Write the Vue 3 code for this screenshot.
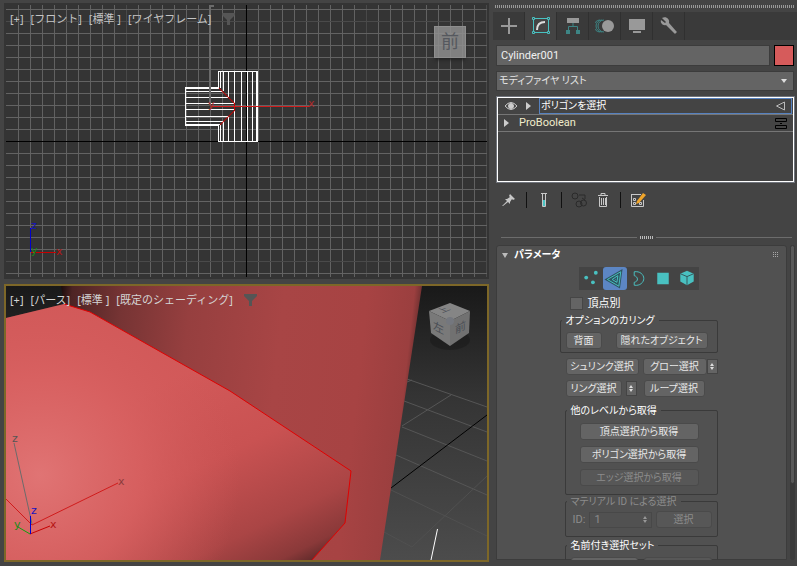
<template>
  <main class="workspace">
    <section class="viewports">
      <!-- Front view -->
      <div class="viewport front">
        <svg class="scene" viewBox="6 5 481 272" preserveAspectRatio="xMidYMid slice">
          <g class="grid">
            <path v-for="x in gridX" :key="'x' + x" :class="lineClass(x, 126, 246)" :d="`M${x + 0.5} 5V277`" />
            <path v-for="y in gridY" :key="'y' + y" :class="lineClass(y, 21, 141)" :d="`M6 ${y + 0.5}H487`" />
            <path class="axis-line" d="M246.500 5V277M6 141.500H487" />
          </g>
          <g class="wire">
            <path d="M218.500 88V71.500H257.500V141.500H218.500V125M256.500 71V142" />
            <path d="M220.500 71V88M220.500 125V141M223.500 71V91M223.500 121V141M228.500 71V97M228.500 116V141M234.500 71V103M234.500 111V141M241.500 71V141M247.500 71V141M252.500 71V141" />
            <path d="M219 87.500H185.500V125.500H219M185 88.500H219M185 124.500H220M185 91.500H223M185 97.500H228M185 103.500H234M185 109.500H234M185 116.500H228M185 121.500H223" />
          </g>
          <path class="edge" d="M219 88L228 97L234.500 103.500V110.500L228 117L220 125" />
          <path class="gizmo-z" d="M210 5V105M210 6H214" />
          <path class="gizmo-x thin" d="M212 106.500H310" />
          <text class="axis-text faded-red" x="308" y="107">x</text>
          <text class="axis-text faded-red" x="208" y="108">y</text>
          <path class="blue" d="M30.500 228V252" />
          <path class="red" d="M31 252.500H56" />
          <text class="axis-text text-blue" x="31" y="229">z</text>
          <text class="axis-text text-green" x="31" y="254">y</text>
          <text class="axis-text text-red" x="56" y="255">x</text>
        </svg>
        <div class="view-labels dim">
          <button v-for="label in frontLabels" :key="label" type="button">{{ label }}</button>
          <svg class="funnel" viewBox="0 0 13 12"><path d="M0 0H13V2L8 7V12H5V7L0 2Z" /></svg>
        </div>
        <button class="front-cube" type="button">前</button>
      </div>

      <!-- Perspective view -->
      <div class="viewport persp">
        <svg class="scene" viewBox="6 286 481 274" preserveAspectRatio="xMidYMid slice">
          <defs>
            <linearGradient id="sky" x1="0" y1="0" x2="0" y2="1">
              <stop offset="0" stop-color="#191919" />
              <stop offset=".4" stop-color="#343434" />
              <stop offset="1" stop-color="#4c4c4c" />
            </linearGradient>
            <linearGradient id="trunk" gradientUnits="userSpaceOnUse" x1="62" y1="286" x2="418" y2="325">
              <stop offset="0" stop-color="#1f0d0d" />
              <stop offset=".03" stop-color="#4d2424" />
              <stop offset=".17" stop-color="#763434" />
              <stop offset=".36" stop-color="#963f3f" />
              <stop offset=".62" stop-color="#a84545" />
              <stop offset=".85" stop-color="#a74343" />
              <stop offset=".98" stop-color="#9b3f3f" />
              <stop offset="1" stop-color="#713131" />
            </linearGradient>
            <linearGradient id="branch" gradientUnits="userSpaceOnUse" x1="190" y1="370" x2="290" y2="575">
              <stop offset="0" stop-color="#d25959" />
              <stop offset=".4" stop-color="#c95252" />
              <stop offset=".75" stop-color="#aa4545" />
              <stop offset=".92" stop-color="#8a3939" />
              <stop offset="1" stop-color="#5a2828" />
            </linearGradient>
            <radialGradient id="shine" gradientUnits="userSpaceOnUse" cx="40" cy="475" r="200">
              <stop offset="0" stop-color="#e07474" />
              <stop offset=".5" stop-color="#d96262" stop-opacity=".8" />
              <stop offset="1" stop-color="#cf5858" stop-opacity="0" />
            </radialGradient>
          </defs>
          <rect x="6" y="286" width="481" height="274" fill="url(#sky)" />
          <path class="floor" d="M407 379L487 407M404 401L487 432M402 427L487 461M396 455L487 495M402 426L451 395M407 382L412 380" />
          <path class="floor far" d="M391 490L487 536M384 532L412 547M412 547L487 476" />
          <path class="floor-axis" d="M391 488L487 415" />
          <path class="white-line" d="M437.500 529L431 560" />
          <path fill="url(#trunk)" d="M61 286H422L380 560H150L64 304Z" />
          <path fill="url(#branch)" d="M6 318L64 304L90 312L230 391L351 471L345 523L312 560H6Z" />
          <path fill="url(#shine)" d="M6 318L64 304L90 312L230 391L351 471L345 523L312 560H6Z" />
          <path class="edge bright" d="M64 304L90 312L230 391L351 471L345 523L312 560" />
          <path class="gizmo-z thin" d="M14 443L32 524" />
          <path class="gizmo-x thin" d="M6 499L32 525L118 483" />
          <path class="green" d="M30 534L18 527" />
          <path class="red" d="M30 534L50 526" />
          <path class="blue" d="M30.500 516V534" />
          <text class="axis-text text-grey" x="12" y="442">z</text>
          <text class="axis-text text-brown" x="118" y="485">x</text>
          <text class="axis-text text-blue" x="31" y="514">z</text>
          <text class="axis-text text-green" x="14" y="528">y</text>
          <text class="axis-text text-red" x="50" y="528">x</text>
        </svg>
        <div class="view-labels">
          <button v-for="label in perspLabels" :key="label" type="button">{{ label }}</button>
          <svg class="funnel" viewBox="0 0 13 12"><path d="M0 0H13V2L8 7V12H5V7L0 2Z" /></svg>
        </div>
        <svg class="persp-cube" viewBox="0 0 50 54">
          <ellipse cx="25" cy="40" rx="20" ry="10" fill="#000" opacity=".18" />
          <path d="M25 3L45 11L25 21L4 11Z" fill="#858585" />
          <path d="M4 11L25 21V46L6 33Z" fill="#797979" />
          <path d="M45 11L25 21V46L44 33Z" fill="#717171" />
          <circle cx="25" cy="21" r="4" fill="#74777e" />
          <text transform="matrix(1 .5 0 1 8 29)">左</text>
          <text transform="matrix(1 -.5 0 1 30 34)">前</text>
          <text class="small" transform="matrix(1 -.4 1 .4 17 13)">上</text>
        </svg>
      </div>
    </section>

    <aside class="panel">
      <div class="grip"></div>
      <nav class="tabs">
        <button
          v-for="tab in tabs"
          :key="tab"
          type="button"
          :aria-label="tab"
          :class="{ active: tab === activeTab }"
          @click="activeTab = tab"
        >
          <svg viewBox="0 0 20 20">
            <path v-if="tab === 'create'" class="ln thick" d="M10 2V18M2 10H18" />
            <g v-else-if="tab === 'modify'">
              <path class="teal-ln" d="M4 2.500H16M4 16.500H16M2.500 4V15M17.500 4V15" />
              <path class="teal-box" d="M1.500 1.500h2v2h-2zM16.500 1.500h2v2h-2zM1.500 15.500h2v2h-2zM16.500 15.500h2v2h-2z" />
              <path class="ln arc" d="M6 14C6 9 9 6 14 6" />
            </g>
            <g v-else-if="tab === 'hierarchy'">
              <path class="fill" d="M4 2H16V7H4Z" />
              <path class="teal-ln dark" d="M10 7V11M5.500 15V10.500H14.500V15" />
              <path class="teal-fill" d="M3 14H7V18H3ZM13 14H17V18H13Z" />
            </g>
            <g v-else-if="tab === 'motion'">
              <path class="teal-ln dark" d="M7 4A6 6 0 0 0 7 16M5 4A6 6 0 0 0 5 16M9 4A6 6 0 0 0 9 16" />
              <circle class="fill" cx="13" cy="10" r="6" />
            </g>
            <path v-else-if="tab === 'display'" class="fill" d="M2 3H18V14H2ZM6 15H14V17H6Z" />
            <path v-else class="fill" d="M3 2L7 6L6 7L2 4C1 7 4 10 7 9L15 17C16 19 19 16 17 15L10 7C11 3 7 0 3 2Z" />
          </svg>
        </button>
      </nav>

      <div class="name-row">
        <input v-model="objectName" type="text" aria-label="オブジェクト名" />
        <button class="swatch" type="button" aria-label="カラー"></button>
      </div>
      <div class="modifier-select">
        <select aria-label="モディファイヤ リスト">
          <option>モディファイヤ リスト</option>
        </select>
      </div>

      <ul class="stack">
        <li>
          <svg class="eye" viewBox="0 0 14 10"><path d="M1 5Q7 -2 13 5Q7 12 1 5Z" /><circle cx="7" cy="5" r="2.500" /></svg>
          <span class="tri"></span>
          <button class="entry selected" type="button">
            ポリゴンを選択
            <svg viewBox="0 0 12 12"><path d="M1.500 6L9.500 2V10Z" /></svg>
          </button>
        </li>
        <li>
          <span class="tri"></span>
          <button class="entry base" type="button">
            ProBoolean
            <svg class="sep-icon" viewBox="0 0 12 12"><path d="M.5 1.500H11.500V4.500H.5ZM.5 8.500H11.500V11.500H.5ZM5 6.500H7" /></svg>
          </button>
        </li>
      </ul>

      <div class="stack-tools">
        <button type="button" aria-label="スタックを固定">
          <svg viewBox="0 0 16 16"><path class="fill light" d="M9 2L14 7L12 8L11 7L9 10L9 12L7 10L2 14L1 14L6 9L4 7L6 7L9 5L8 4Z" /></svg>
        </button>
        <i></i>
        <button type="button" aria-label="最終結果を表示">
          <svg viewBox="0 0 16 16"><path class="ln light-ln" d="M5 1.500H11M6.500 2V14.500H9.500V2" /><path fill="#4cc4c4" d="M7 8H9V14H7Z" /></svg>
        </button>
        <i></i>
        <button type="button" aria-label="固有にする">
          <svg viewBox="0 0 16 16"><g class="dark-ln"><circle cx="4" cy="4" r="3" /><circle cx="8" cy="12" r="3" /><circle cx="12.500" cy="11" r="3" /><path d="M8 3H14V7M11 6L14 8" /></g></svg>
        </button>
        <button type="button" aria-label="モディファイヤを除去">
          <svg viewBox="0 0 16 16"><path class="ln light-ln" d="M3 3.500H13M6 3V1.500H10V3M4.500 5V14.500H11.500V5M6.500 6V13M8.500 6V13M10.500 6V13" /></svg>
        </button>
        <i></i>
        <button type="button" aria-label="モディファイヤ セットを設定">
          <svg viewBox="0 0 16 16">
            <path class="ln light-ln" d="M1.500 2V14.500H13.500V8M1 2.500H11M3.500 6.500H5.500V8.500H3.500ZM3.500 10.500H5.500V12.500H3.500ZM9.500 10.500H11.500V12.500H9.500Z" />
            <path fill="#f0a52a" d="M13 1L16 3L9 11L6 12L7 9Z" />
          </svg>
        </button>
      </div>

      <div class="splitter"><span></span></div>

      <div class="rollout-area">
        <section class="rollout">
          <header>
            <span class="tri down"></span>
            <h2>パラメータ</h2>
            <svg class="dots" viewBox="0 0 6 6"><path d="M0 .5H6M0 2.500H6M0 4.500H6" /></svg>
          </header>

          <div class="params">
            <div class="levels">
              <button
                v-for="level in levels"
                :key="level"
                type="button"
                :aria-label="level"
                :class="{ active: level === activeLevel }"
                @click="activeLevel = level"
              >
                <svg viewBox="0 0 24 24">
                  <g v-if="level === 'vertex'" fill="#49c1c1"><circle cx="7" cy="11" r="2" /><circle cx="17" cy="6" r="2" /><circle cx="14" cy="16" r="2" /></g>
                  <g v-else-if="level === 'edge'" class="edge-icon">
                    <path class="outline" d="M4 13L18 5L16 20Z" />
                    <path class="outline" d="M9 13L15 9L14 16Z" />
                    <path d="M4 13L18 5L16 20Z" />
                    <path d="M9 13L15 9L14 16Z" />
                  </g>
                  <path v-else-if="level === 'border'" class="border-icon" d="M7 5C13 4 17 8 17 12C17 16 13 20 7 19V16C12 15 11 10 7 9Z" />
                  <path v-else-if="level === 'polygon'" fill="#49c1c1" d="M6 6H18V18H6Z" />
                  <g v-else><path fill="#49c1c1" d="M12 4L19 7V15L12 19L5 15V7Z" /><path class="cube-lines" d="M5 7L12 10L19 7M12 10V19" /></g>
                </svg>
              </button>
            </div>

            <label class="check"><input v-model="byVertex" type="checkbox" />頂点別</label>

            <fieldset class="culling">
              <legend>オプションのカリング</legend>
              <button class="btn" type="button">背面</button>
              <button class="btn wide" type="button">隠れたオブジェクト</button>
            </fieldset>

            <div class="select-row">
              <button class="btn shrink" type="button">シュリンク選択</button>
              <button class="btn grow" type="button">グロー選択</button>
              <span class="spin"></span>
            </div>
            <div class="select-row">
              <button class="btn ring" type="button">リング選択</button>
              <span class="spin"></span>
              <button class="btn loop" type="button">ループ選択</button>
            </div>

            <fieldset class="levels-from">
              <legend>他のレベルから取得</legend>
              <button class="btn" type="button">頂点選択から取得</button>
              <button class="btn" type="button">ポリゴン選択から取得</button>
              <button class="btn" type="button" disabled>エッジ選択から取得</button>
            </fieldset>

            <fieldset class="material" disabled>
              <legend>マテリアル ID による選択</legend>
              <label for="mat-id">ID:</label>
              <div class="id-box">
                <input id="mat-id" v-model="materialId" type="text" />
                <span class="spin flat"></span>
              </div>
              <button class="btn" type="button">選択</button>
            </fieldset>

            <fieldset class="named">
              <legend>名前付き選択セット</legend>
              <button class="btn" type="button" aria-label="コピー"></button>
              <button class="btn" type="button" aria-label="貼り付け" disabled></button>
            </fieldset>
          </div>
        </section>
        <div class="scrollbar"><span></span></div>
      </div>
    </aside>
  </main>
</template>

<script setup>
import { ref } from 'vue'

const frontLabels = ['[+]', '[フロント]', '[標準 ]', '[ワイヤフレーム]']
const perspLabels = ['[+]', '[パース]', '[標準 ]', '[既定のシェーディング]']

// Grid lines of the front view, 12 units apart
const gridX = Array.from({ length: 40 }, (_, i) => 18 + i * 12)
const gridY = Array.from({ length: 23 }, (_, i) => 9 + i * 12)

// Every tenth line is drawn darker
const lineClass = (pos, firstMajor, axis) =>
  (pos - firstMajor) % 120 === 0 && pos !== axis ? 'major' : 'minor'

const tabs = ['create', 'modify', 'hierarchy', 'motion', 'display', 'utilities']
const activeTab = ref('modify')

const levels = ['vertex', 'edge', 'border', 'polygon', 'element']
const activeLevel = ref('edge')

const objectName = ref('Cylinder001')
const byVertex = ref(false)
const materialId = ref('1')
</script>

<style>
body {
  background: #444;
}
</style>

<style scoped>
* {
  box-sizing: border-box;
}

.workspace {
  display: flex;
  gap: 4px;
  height: 100vh;
  padding: 3px 0 4px 4px;
  overflow: hidden;
  background: #444;
  color: #eee;
  font: 10px/12px Roboto, "Noto Sans CJK JP", sans-serif;
  font-feature-settings: "palt";
}

button,
input,
select {
  margin: 0;
  padding: 0;
  border: 0;
  background: none;
  color: inherit;
  font: inherit;
  font-feature-settings: inherit;
}

svg {
  display: block;
}

/* Viewports */
.viewports {
  display: flex;
  flex: 1;
  flex-direction: column;
  gap: 5px;
  min-width: 0;
}

.viewport {
  position: relative;
  min-height: 0;
  overflow: hidden;
  border: 2px solid #343434;
  background: #343434;
}

.front {
  flex: 276 0 0;
}

.persp {
  flex: 278 0 0;
  border-color: #7d6728;
}

.scene {
  width: 100%;
  height: 100%;
}

.scene path {
  stroke-width: 1;
}

.grid path,
.wire path,
.edge {
  fill: none;
}

.grid .minor {
  stroke: #636363;
}

.grid .major {
  stroke: #4a4a4a;
}

.grid .axis-line {
  stroke: #000;
}

.wire path {
  stroke: #fff;
}

.edge {
  stroke: #c80000;
}

.edge.bright {
  stroke: #e00000;
}

.scene .gizmo-z {
  fill: none;
  stroke: #6b6b6b;
  stroke-width: 2;
}

.scene .gizmo-x {
  fill: none;
  stroke: #d01c1c;
}

.scene .thin {
  stroke-width: 1;
}

.red {
  stroke: #c80000;
}

.green {
  stroke: #10a010;
}

.blue {
  stroke: #0000d0;
}

.axis-text {
  font: 11px "DejaVu Sans", sans-serif;
}

.faded-red {
  fill: #b02a2a;
}

.text-red {
  fill: #b41414;
}

.text-green {
  fill: #1a8a1a;
}

.text-blue {
  fill: #1414c0;
}

.text-grey {
  fill: #555;
}

.text-brown {
  fill: #8c3c3c;
}

.floor {
  fill: none;
  stroke: #565656;
}

.floor.far {
  stroke: #505050;
}

.floor-axis {
  stroke: #000;
}

.white-line {
  stroke: #fff;
}

.view-labels {
  position: absolute;
  top: 8px;
  left: 4px;
  display: flex;
  gap: 7px;
  align-items: center;
  color: #d4d4d4;
  font-family: "Noto Sans", "Noto Sans CJK JP", sans-serif;
  font-size: 11px;
  font-feature-settings: normal;
  text-shadow: 1px 1px 0 #222;
  white-space: nowrap;
}

.view-labels.dim {
  color: #c4c4c4;
}

.funnel {
  width: 13px;
  height: 12px;
  margin-left: 4px;
  fill: #555;
}

.front-cube {
  position: absolute;
  top: 21px;
  right: 21px;
  width: 32px;
  height: 32px;
  border: 1px solid #8e8e8e;
  background: rgba(142, 142, 142, 0.85);
  box-shadow: 0 3px 3px -1px #222;
  color: #55585e;
  font-size: 18px;
  line-height: 24px;
}

.persp-cube {
  position: absolute;
  top: 14px;
  right: 12px;
  width: 50px;
  height: 54px;
  fill: #4a4e55;
  font-size: 11px;
}

.persp-cube .small {
  font-size: 9px;
}

/* Command panel */
.panel {
  display: flex;
  flex-direction: column;
  width: 304px;
  min-height: 0;
}

.grip {
  height: 3px;
  margin: 2px 3px 4px 2px;
  background: repeating-linear-gradient(90deg, #999 0 1px, transparent 1px 2px);
}

.tabs {
  display: flex;
  flex: none;
  height: 28px;
  background: #3a3a3a;
}

.tabs button {
  display: grid;
  place-items: center;
  width: 32px;
  border-right: 1px solid #303030;
}

.tabs button.active {
  background: #444;
}

.tabs svg {
  width: 20px;
  height: 20px;
}

.fill {
  fill: #999;
}

.fill.light {
  fill: #c8c8c8;
}

.ln {
  fill: none;
  stroke: #999;
}

.ln.thick {
  stroke-width: 2;
}

.ln.arc {
  stroke: #ddd;
  stroke-width: 2;
}

.ln.light-ln {
  stroke: #c8c8c8;
}

.dark-ln {
  fill: none;
  stroke: #2a2a2a;
}

.teal-ln,
.teal-box {
  fill: none;
  stroke: #49c1c1;
}

.teal-ln.dark {
  stroke: #3d8585;
}

.teal-fill {
  fill: #3d8585;
}

.name-row {
  display: flex;
  gap: 4px;
  margin: 5px 3px 5px 3px;
}

.name-row input {
  flex: 1;
  min-width: 0;
  height: 21px;
  padding: 0 4px;
  border: 1px solid #3c3c3c;
  background: #646464;
  color: #f0f0f0;
  font-size: 11px;
}

.swatch {
  width: 20px;
  height: 21px;
  border: 1px solid #000;
  background: #d65b5b;
}

.modifier-select {
  position: relative;
  margin: 0 3px 5px 3px;
}

.modifier-select select {
  display: block;
  width: 100%;
  height: 20px;
  padding: 0 2px;
  border: 1px solid #3c3c3c;
  appearance: none;
  background: #646464;
  color: #e4e4e4;
}

.modifier-select::after {
  position: absolute;
  top: 8px;
  right: 7px;
  border: 3px solid transparent;
  border-top: 4px solid #ddd;
  border-bottom: 0;
  content: "";
}

.stack {
  flex: none;
  height: 87px;
  margin: 0 2px 0 3px;
  padding: 0;
  border: 2px solid #fff;
  outline: 1px solid #70747c;
  outline-offset: -1px;
  list-style: none;
}

.stack li {
  display: flex;
  gap: 8px;
  align-items: center;
  height: 17px;
  padding: 0 1px 0 6px;
  border-bottom: 1px solid #767676;
}

.eye {
  width: 14px;
  height: 10px;
  fill: #444;
  stroke: #ccc;
}

.eye circle {
  fill: #ccc;
}

.tri {
  border: 4px solid transparent;
  border-right: 0;
  border-left: 5px solid #ccc;
}

.entry {
  display: flex;
  flex: 1;
  align-items: center;
  justify-content: space-between;
  height: 16px;
  padding: 0 4px 0 1px;
  border: 1px solid transparent;
  text-align: left;
}

.entry.selected {
  border-color: #5782c0;
  color: #fff;
}

.entry.base {
  color: #f0eccb;
  font-size: 11px;
}

.entry svg {
  width: 12px;
  height: 12px;
  fill: none;
  stroke: #bbb;
}

.entry .sep-icon {
  stroke: #000;
}

.stack-tools {
  display: flex;
  gap: 8px;
  align-items: center;
  margin: 9px 4px 0 8px;
}

.stack-tools svg {
  width: 16px;
  height: 16px;
}

.stack-tools i {
  width: 1px;
  height: 16px;
  margin: 0 1px;
  background: #111;
}

.splitter {
  display: flex;
  align-items: center;
  height: 8px;
  margin: 25px 5px 4px 8px;
}

.splitter::before,
.splitter::after {
  flex: 1;
  height: 1px;
  background: #6c6c6c;
  content: "";
}

.splitter span {
  width: 13px;
  height: 3px;
  margin: 0 3px;
  background: repeating-linear-gradient(90deg, #bbb 0 1px, transparent 1px 2px);
}

/* Rollout */
.rollout-area {
  display: flex;
  flex: 1;
  gap: 3px;
  min-height: 0;
  margin: 0 2px 2px 3px;
  overflow: hidden;
}

.rollout {
  flex: 1;
  border: 1px solid #3c3c3c;
  border-radius: 3px 3px 0 0;
  background: #515151;
}

.rollout header {
  display: flex;
  gap: 6px;
  align-items: center;
  height: 18px;
  padding: 0 7px 0 5px;
}

.tri.down {
  border: 3px solid transparent;
  border-top: 5px solid #bbb;
  border-bottom: 0;
}

.rollout h2 {
  flex: 1;
  margin: 0;
  color: #fff;
  font-size: 10px;
  font-weight: 700;
}

.dots {
  width: 6px;
  height: 6px;
  stroke: #a8a8a8;
  stroke-dasharray: 1 1;
}

.scrollbar {
  width: 5px;
  border-radius: 3px;
  background: #3a3a3a;
}

.scrollbar span {
  display: block;
  height: 76%;
  border: 1px solid #3a3a3a;
  border-radius: 3px;
  background: #595959;
}

.params {
  display: flex;
  flex-direction: column;
  width: 164px;
  margin: 3px auto 0;
  padding-right: 6px;
}

.levels {
  display: flex;
  align-self: center;
  background: #444;
}

.levels button {
  padding: 0;
  border-radius: 3px;
}

.levels button.active {
  background: #5c86c4;
}

.levels svg {
  width: 24px;
  height: 23px;
}

.edge-icon,
.border-icon {
  fill: none;
  stroke: #49c1c1;
}

.edge-icon .outline {
  stroke: #2d5560;
  stroke-width: 3;
}

.cube-lines {
  fill: none;
  stroke: #35565a;
}

.check {
  display: flex;
  gap: 5px;
  align-items: center;
  margin: 7px 0 4px 10px;
  color: #fff;
  font-size: 11px;
}

.check input {
  width: 13px;
  height: 13px;
  border: 1px solid #464646;
  appearance: none;
  background: #646464;
}

.check input:checked {
  background: #5c86c4;
}

fieldset {
  display: flex;
  min-width: 0;
  margin: 0;
  padding: 6px 5px 3px;
  border: 1px solid #3a3a3a;
  border-radius: 2px;
}

legend {
  height: 12px;
  padding: 0 4px;
  margin-left: -4px;
  color: #fff;
  line-height: 14px;
  white-space: nowrap;
}

.btn {
  height: 17px;
  border: 1px solid #4a4a4a;
  border-radius: 3px;
  background: #646464;
  color: #e8e8e8;
  line-height: 15px;
  white-space: nowrap;
}

.btn:disabled {
  background: #575757;
  color: #8c8c8c;
}

.culling {
  justify-content: space-between;
  padding-right: 9px;
}

.culling .btn {
  width: 36px;
}

.culling .wide {
  width: 92px;
}

.select-row {
  display: flex;
  align-items: center;
  margin: 5px 0 0 6px;
}

.shrink {
  width: 73px;
}

.grow {
  width: 64px;
  margin-left: 4px;
}

.ring {
  width: 56px;
}

.ring + .spin {
  margin: 0 7px 0 4px;
}

.loop {
  width: 61px;
}

.spin {
  position: relative;
  width: 11px;
  height: 15px;
  border: 1px solid #444;
  background: #646464;
}

.spin::before,
.spin::after {
  position: absolute;
  left: 2px;
  border: 2px solid transparent;
  content: "";
}

.spin::before {
  top: 3px;
  border-top: 0;
  border-bottom: 3px solid #ddd;
}

.spin::after {
  bottom: 3px;
  border-top: 3px solid #ddd;
  border-bottom: 0;
}

.spin.flat {
  border-color: transparent;
  background: none;
  opacity: 0.5;
}

.levels-from,
.material,
.named {
  margin-left: 5px;
}

.levels-from {
  flex-direction: column;
  gap: 6px;
  margin-top: 7px;
  padding: 7px 18px 8px 14px;
}

.levels-from legend {
  margin-left: -13px;
}

.material {
  gap: 4px;
  align-items: center;
  padding: 4px 5px 8px 7px;
  color: #8c8c8c;
  font-size: 11px;
}

.material legend {
  margin-left: -6px;
  color: #8c8c8c;
  font-size: 10px;
}

.id-box {
  display: flex;
  flex: 1;
  align-items: center;
  min-width: 0;
  height: 16px;
  border: 1px solid #484848;
}

.id-box input {
  flex: 1;
  width: 0;
  padding-left: 4px;
}

.material .btn {
  width: 56px;
  font-size: 10px;
}

.named {
  gap: 6px;
  margin-top: 2px;
  padding: 6px 5px;
}

.named .btn {
  flex: 1;
}
</style>
